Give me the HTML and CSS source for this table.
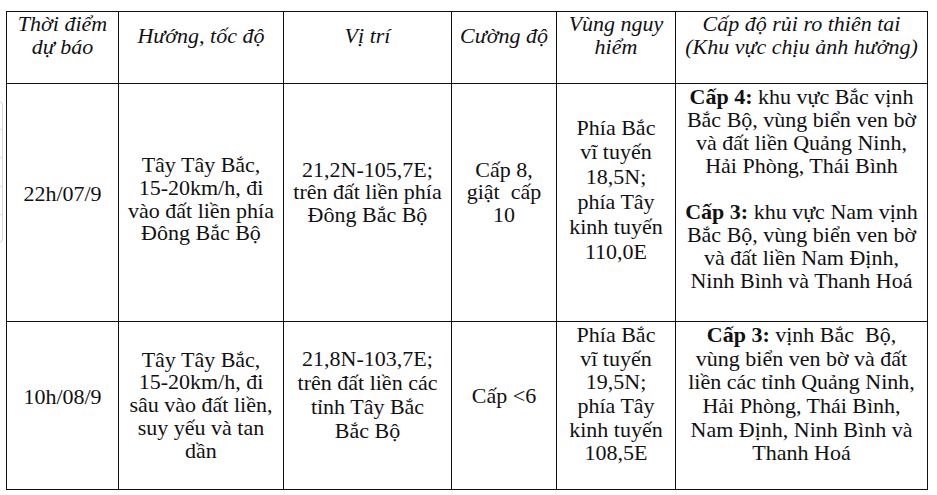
FILE: index.html
```html
<!DOCTYPE html>
<html lang="vi">
<head>
<meta charset="utf-8">
<title>Dự báo bão</title>
<link rel="stylesheet" href="styles.css">
</head>
<body>
<div class="page">
  <div class="edge-widget">
    <span class="edge-seg"></span>
    <span class="edge-seg"></span>
    <span class="edge-seg"></span>
    <span class="edge-seg"></span>
    <span class="edge-seg"></span>
  </div>
  <table class="forecast">
    <colgroup>
      <col class="c-time">
      <col class="c-dir">
      <col class="c-pos">
      <col class="c-int">
      <col class="c-zone">
      <col class="c-risk">
    </colgroup>
    <thead>
      <tr class="row-head">
        <th>Thời điểm<br>dự báo</th>
        <th>Hướng, tốc độ</th>
        <th>Vị trí</th>
        <th>Cường độ</th>
        <th>Vùng nguy<br>hiểm</th>
        <th>Cấp độ rủi ro thiên tai<br>(Khu vực chịu ảnh hưởng)</th>
      </tr>
    </thead>
    <tbody>
      <tr class="row-one">
        <td class="pb-19">22h/07/9</td>
        <td class="pb-6 lh-228">Tây Tây Bắc,<br>15-20km/h, đi<br>vào đất liền phía<br>Đông Bắc Bộ</td>
        <td class="pb-20 lh-226">21,2N-105,7E;<br>trên đất liền phía<br>Đông Bắc Bộ</td>
        <td class="pb-20 lh-226">Cấp 8,<br>giật&nbsp; cấp<br>10</td>
        <td class="pb-25 lh-248">Phía Bắc<br>vĩ tuyến<br>18,5N;<br>phía Tây<br>kinh tuyến<br>110,0E</td>
        <td class="pb-29 risk">
          <p class="risk-para"><b>Cấp 4:</b> khu vực Bắc vịnh<br>Bắc Bộ, vùng biển ven bờ<br>và đất liền Quảng Ninh,<br>Hải Phòng, Thái Bình</p>
          <p class="risk-para"><b>Cấp 3:</b> khu vực Nam vịnh<br>Bắc Bộ, vùng biển ven bờ<br>và đất liền Nam Định,<br>Ninh Bình và Thanh Hoá</p>
        </td>
      </tr>
      <tr class="row-two">
        <td class="pb-19">10h/08/9</td>
        <td class="pb-0 lh-228">Tây Tây Bắc,<br>15-20km/h, đi<br>sâu vào đất liền,<br>suy yếu và tan<br>dần</td>
        <td class="pb-21 lh-240">21,8N-103,7E;<br>trên đất liền các<br>tỉnh Tây Bắc<br>Bắc Bộ</td>
        <td class="pb-20">Cấp &lt;6</td>
        <td class="pb-23 lh-236">Phía Bắc<br>vĩ tuyến<br>19,5N;<br>phía Tây<br>kinh tuyến<br>108,5E</td>
        <td class="pb-23 lh-236"><b>Cấp 3:</b> vịnh Bắc&nbsp; Bộ,<br>vùng biển ven bờ và đất<br>liền các tỉnh Quảng Ninh,<br>Hải Phòng, Thái Bình,<br>Nam Định, Ninh Bình và<br>Thanh Hoá</td>
      </tr>
    </tbody>
  </table>
</div>
</body>
</html>
```
FILE: styles.css
```css
html, body {
  margin: 0;
  padding: 0;
  background: #ffffff;
}

.page {
  position: relative;
  width: 937px;
  height: 495px;
  overflow: hidden;
  padding: 11px 0 0 6px;
  box-sizing: border-box;
  font-family: "Liberation Serif", "Times New Roman", serif;
  color: #111111;
}

.edge-widget {
  position: absolute;
  left: -10px;
  top: 101px;
  width: 13px;
  height: 142px;
  border: 1px solid #d6d6d6;
  border-radius: 4px;
  display: flex;
  flex-direction: column;
  box-sizing: border-box;
}

.edge-seg {
  flex: 1;
  border-bottom: 1px solid #e2e2e2;
}

.edge-seg:last-child {
  border-bottom: none;
}

.forecast {
  border-collapse: collapse;
  table-layout: fixed;
  width: 921px;
  font-size: 22px;
  line-height: 23px;
}

.c-time { width: 112px; }
.c-dir { width: 165px; }
.c-pos { width: 168px; }
.c-int { width: 105px; }
.c-zone { width: 119px; }
.c-risk { width: 252px; }

.forecast th,
.forecast td {
  border: 1px solid #111111;
  text-align: center;
  vertical-align: middle;
  padding: 0 2px 20px;
  white-space: nowrap;
}

.forecast th {
  font-style: italic;
  font-weight: normal;
  padding-bottom: 25px;
}

.row-head { height: 71px; }
.row-one { height: 238px; }
.row-two { height: 168px; }

.risk-para {
  margin: 0;
}

.risk-para + .risk-para {
  margin-top: 23px;
}

.forecast b {
  font-weight: bold;
}

.lh-226 { line-height: 22.6px; }
.lh-228 { line-height: 22.8px; }
.lh-236 { line-height: 23.6px; }
.lh-240 { line-height: 24px; }
.lh-248 { line-height: 24.8px; }

.forecast .pb-0 { padding-bottom: 0; }
.forecast .pb-6 { padding-bottom: 6px; }
.forecast .pb-19 { padding-bottom: 19px; }
.forecast .pb-20 { padding-bottom: 20px; }
.forecast .pb-21 { padding-bottom: 21px; }
.forecast .pb-23 { padding-bottom: 23px; }
.forecast .pb-25 { padding-bottom: 25px; }
.forecast .pb-29 { padding-bottom: 29px; }
```
